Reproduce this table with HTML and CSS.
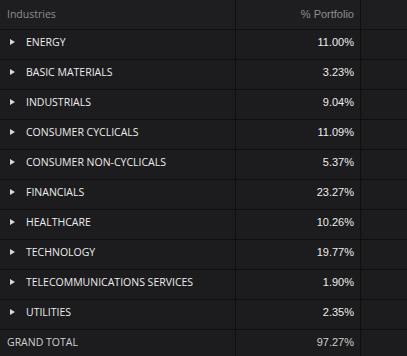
FILE: index.html
```html
<!DOCTYPE html>
<html>
<head>
<meta charset="utf-8">
<link rel="stylesheet" href="styles.css">
</head>
<body>
<div class="table">
  <div class="row head">
    <div class="cell name">Industries</div>
    <div class="cell val">% Portfolio</div>
    <div class="cell extra"></div>
  </div>
  <div class="row"><div class="cell name"><span class="tri"></span>ENERGY</div><div class="cell val">11.00%</div><div class="cell extra"></div></div>
  <div class="row"><div class="cell name"><span class="tri"></span>BASIC MATERIALS</div><div class="cell val">3.23%</div><div class="cell extra"></div></div>
  <div class="row"><div class="cell name"><span class="tri"></span>INDUSTRIALS</div><div class="cell val">9.04%</div><div class="cell extra"></div></div>
  <div class="row"><div class="cell name"><span class="tri"></span>CONSUMER CYCLICALS</div><div class="cell val">11.09%</div><div class="cell extra"></div></div>
  <div class="row"><div class="cell name"><span class="tri"></span>CONSUMER NON-CYCLICALS</div><div class="cell val">5.37%</div><div class="cell extra"></div></div>
  <div class="row"><div class="cell name"><span class="tri"></span>FINANCIALS</div><div class="cell val">23.27%</div><div class="cell extra"></div></div>
  <div class="row"><div class="cell name"><span class="tri"></span>HEALTHCARE</div><div class="cell val">10.26%</div><div class="cell extra"></div></div>
  <div class="row"><div class="cell name"><span class="tri"></span>TECHNOLOGY</div><div class="cell val">19.77%</div><div class="cell extra"></div></div>
  <div class="row"><div class="cell name"><span class="tri"></span>TELECOMMUNICATIONS SERVICES</div><div class="cell val">1.90%</div><div class="cell extra"></div></div>
  <div class="row"><div class="cell name"><span class="tri"></span>UTILITIES</div><div class="cell val">2.35%</div><div class="cell extra"></div></div>
  <div class="row total"><div class="cell name">GRAND TOTAL</div><div class="cell val">97.27%</div><div class="cell extra"></div></div>
</div>
</body>
</html>
```
FILE: styles.css
```css
html, body {
  margin: 0;
  padding: 0;
  background: #1c1c1e;
}
.table {
  width: 407px;
  height: 356px;
  overflow: hidden;
  font-family: "Open Sans", sans-serif;
  font-size: 10.5px;
}
.row {
  display: grid;
  grid-template-columns: 236px 125px 46px;
  height: 30px;
  border-top: 1px solid #0f0f10;
  box-sizing: border-box;
  color: #ececec;
}
.row.head {
  height: 29px;
  border-top: none;
  color: #8e8e8e;
  background: #1e1e20;
}
.cell {
  display: flex;
  align-items: center;
  border-right: 1px solid #0f0f10;
  box-sizing: border-box;
  padding-bottom: 5px;
}
.head .cell {
  padding-bottom: 2px;
}
.cell.extra {
  border-right: none;
}
.name {
  padding-left: 26px;
  font-weight: 500;
}
.head .name, .total .name {
  padding-left: 7px;
}
.head .name {
  font-weight: 400;
}
.val {
  justify-content: flex-end;
  padding-right: 6px;
  font-family: "Liberation Sans", Arial, sans-serif;
  font-size: 11px;
}
.tri {
  width: 0;
  height: 0;
  border-left: 5px solid #d8d8d8;
  border-top: 3px solid transparent;
  border-bottom: 3px solid transparent;
  margin-left: -16px;
  margin-right: 11px;
}
.total {
  color: #cfcfcf;
}
```
